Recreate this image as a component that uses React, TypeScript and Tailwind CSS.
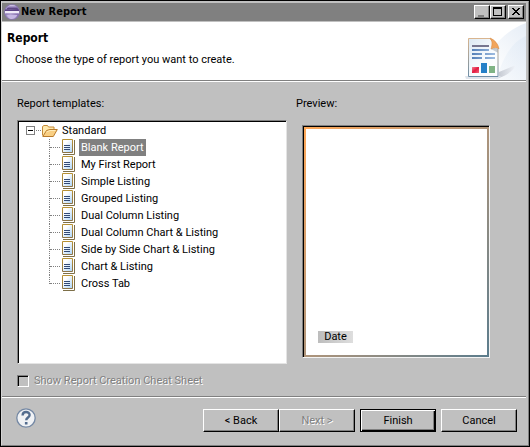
import type { ReactNode } from "react";

const templates = [
  "Blank Report",
  "My First Report",
  "Simple Listing",
  "Grouped Listing",
  "Dual Column Listing",
  "Dual Column Chart & Listing",
  "Side by Side Chart & Listing",
  "Chart & Listing",
  "Cross Tab",
];

function EclipseLogo() {
  return (
    <svg className="h-4 w-4 shrink-0" viewBox="0 0 16 16" aria-hidden="true">
      <defs>
        <linearGradient id="orb" x1="0" y1="0" x2="1" y2="0">
          <stop offset="0" stopColor="#8f80b8" />
          <stop offset="0.4" stopColor="#d9d0ee" />
          <stop offset="1" stopColor="#75589f" />
        </linearGradient>
        <linearGradient id="orbTop" x1="0" y1="0" x2="0" y2="1">
          <stop offset="0" stopColor="#d8d0ea" />
          <stop offset="0.5" stopColor="#8d78b4" />
          <stop offset="1" stopColor="#3b2360" />
        </linearGradient>
      </defs>
      <circle cx="8" cy="8" r="7.8" fill="#8a74b4" />
      <circle cx="8" cy="8" r="7" fill="url(#orb)" />
      <path d="M2.500 5.500C3.400 2.700 6 1 8.500 1s4.800 1.800 5.700 4.500Z" fill="url(#orbTop)" />
      <path d="M1 5.500h14v1.500H1z" fill="#5b4385" />
      <path d="M1 7h14v2.500H1z" fill="#efeaf8" />
      <path d="M1.500 9.500h13v1H1.500z" fill="#8a74b4" />
      <path d="M3 11h10.500l-1.500 2a6 6 0 0 1-7.500 0Z" fill="#c6b8e4" />
    </svg>
  );
}

function ReportBanner() {
  return (
    <svg className="h-[58px] w-[75px] shrink-0" viewBox="0 0 75 58" aria-hidden="true">
      <defs>
        <linearGradient id="swoosh" x1="0" y1="1" x2="1" y2="0">
          <stop offset="0.3" stopColor="#ffffff" />
          <stop offset="1" stopColor="#e6edf6" />
        </linearGradient>
        <linearGradient id="swooshInner" x1="0" y1="1" x2="1" y2="0">
          <stop offset="0" stopColor="#f3f7fb" />
          <stop offset="1" stopColor="#dce7f4" />
        </linearGradient>
        <linearGradient id="shade" x1="0" y1="0" x2="1" y2="0">
          <stop offset="0" stopColor="#b7bcc6" />
          <stop offset="1" stopColor="#f2f5fa" />
        </linearGradient>
        <linearGradient id="paper" x1="0" y1="0" x2="1" y2="1">
          <stop offset="0" stopColor="#dce9f3" />
          <stop offset="0.6" stopColor="#fafcfe" />
          <stop offset="1" stopColor="#ffffff" />
        </linearGradient>
        <linearGradient id="edge" x1="0" y1="0" x2="0" y2="1">
          <stop offset="0" stopColor="#d9b58f" />
          <stop offset="1" stopColor="#6f8ea6" />
        </linearGradient>
        <linearGradient id="textBar" x1="0" y1="0" x2="1" y2="0">
          <stop offset="0" stopColor="#5480b8" />
          <stop offset="1" stopColor="#9dbbe0" />
        </linearGradient>
        <linearGradient id="redBar" x1="0" y1="0" x2="1" y2="1">
          <stop offset="0" stopColor="#f08090" />
          <stop offset="0.5" stopColor="#e21a40" />
          <stop offset="1" stopColor="#f4647c" />
        </linearGradient>
      </defs>
      <path d="M75 1C59 7 49 16 42 27L15 58h60Z" fill="url(#swoosh)" />
      <path d="M75 14C61 20 52 35 45 58h30Z" fill="url(#swooshInner)" opacity=".6" />
      <path d="M48 50l17-7c-3 6-9 10-17 13Z" fill="url(#shade)" opacity=".75" />
      <path d="M14 54h36l-3 3H15Z" fill="#e0e5ec" />
      <path d="M17.500 16.500H39l8 10V54.500H17.500Z" fill="url(#paper)" stroke="url(#edge)" />
      <path d="M39 16c2.500 3 2.500 6 1 11 3-1.500 6-1.500 8-.2C47 22 44 18 39 16Z" fill="#f2a55c" stroke="#d98d48" strokeWidth=".6" />
      <path d="M40 27c3-1.500 5-1.200 7-.2v4Z" fill="#8e99a8" opacity=".5" />
      <path d="M21 23h17v2H21z" fill="#777790" />
      <path d="M21 27h17v2H21zM21 31h10v2H21zM34 31h10v2H34zM21 35h10v2H21zM34 35h10v2H34z" fill="url(#textBar)" />
      <path d="M21 45h7v6h-7z" fill="url(#redBar)" />
      <path d="M30 41h6v10h-6z" fill="#2580c8" />
      <path d="M38 44h6v7h-6z" fill="#80b485" />
    </svg>
  );
}

function FolderIcon() {
  return (
    <svg className="h-4 w-4 shrink-0" viewBox="0 0 16 16" aria-hidden="true">
      <path d="M.5 12.500V3.500l1.500-1h3.500l1 1.500h5.500v3" fill="#ffe9ae" stroke="#c58a36" />
      <path d="M.8 13.500 4.500 7.500l3.500-1h7.300l-4 7Z" fill="#f9cf83" stroke="#b97b2b" />
      <path d="M4.500 9 8 7.500h5.500" fill="none" stroke="#ffedbb" />
    </svg>
  );
}

function PageIcon() {
  return (
    <svg className="h-[17px] w-[13px] shrink-0" viewBox="0 0 13 17" aria-hidden="true">
      <defs>
        <linearGradient id="sheet" x1="0" y1="0" x2="1" y2="1">
          <stop offset="0.3" stopColor="#ffffff" />
          <stop offset="1" stopColor="#a9d3f8" />
        </linearGradient>
        <linearGradient id="frame" x1="0" y1="0" x2="0" y2="1">
          <stop offset="0" stopColor="#b89235" />
          <stop offset="1" stopColor="#8c7446" />
        </linearGradient>
      </defs>
      <path d="M12.500 1v14.500H1" fill="none" stroke="#7d6f48" />
      <path d="M.5 .5h10v13H.5z" fill="url(#sheet)" stroke="url(#frame)" />
      <path d="M2 6.500h6M2 8.500h6M2 10.500h6" stroke="#334a76" />
    </svg>
  );
}

function TitleButton({ label, children }: { label: string; children: ReactNode }) {
  return (
    <button
      aria-label={label}
      className="h-[14px] w-4 border border-t-white border-r-black border-b-black border-l-white bg-[#c0c0c0] shadow-[inset_-1px_-1px_0_#808080]"
    >
      <svg className="h-3 w-[14px]" viewBox="0 0 14 12" shapeRendering="crispEdges" aria-hidden="true">
        {children}
      </svg>
    </button>
  );
}

const pushButton =
  "h-[23px] w-[76px] border border-t-white border-r-black border-b-black border-l-white bg-[#c0c0c0] text-center leading-4 shadow-[inset_-1px_-1px_0_#808080]";

export default function App() {
  return (
    <div className="border border-black bg-[#c0c0c0] font-['Roboto',sans-serif] text-[11px] leading-4 text-black">
      <div className="border-t border-r border-b border-l border-t-[#c0c0c0] border-r-[#808080] border-b-[#808080] border-l-[#d4d4d4]">
        <div className="pt-px pr-[2px]">
          <header className="flex h-[18px] items-center bg-[#808080] pr-[2px] pl-[2px]">
            <EclipseLogo />
            <h1 className="ml-px flex-1 font-['DejaVu_Sans_Condensed','DejaVu_Sans',sans-serif] font-bold">New Report</h1>
            <TitleButton label="Minimize">
              <path d="M3 9h6v2H3z" fill="#808080" />
            </TitleButton>
            <TitleButton label="Maximize">
              <path d="M2 1h9v9H2zM3 3v6h7V3z" fill="#000" fillRule="evenodd" />
            </TitleButton>
            <span className="w-[2px]" />
            <TitleButton label="Close">
              <path
                d="M3 2h2v1h1v1h2V3h1V2h2v1h-1v1H9v1H8v1h1v1h1v1h1v1H9V8H8V7H6v1H5v1H3V8h1V7h1V6h1V5H5V4H4V3H3z"
                fill="#000"
              />
            </TitleButton>
          </header>

          <section className="mt-px flex justify-between border-b border-[#808080] bg-white">
            <div className="pt-2 pl-[5px]">
              <h2 className="font-['DejaVu_Sans_Condensed','DejaVu_Sans',sans-serif] text-[12px] font-bold">Report</h2>
              <p className="mt-[6px] pl-2">Choose the type of report you want to create.</p>
            </div>
            <ReportBanner />
          </section>

          <main className="border-t border-white pt-[14px] pr-9 pb-[7px] pl-[15px]">
            <div className="flex items-start gap-[15px]">
              <div className="min-w-0 flex-1">
                <h3 id="templates-label">Report templates:</h3>
                <div className="mt-2 min-h-[244px] border border-t-[#808080] border-r-[#e4e4e4] border-b-[#e4e4e4] border-l-[#808080] bg-white pb-1 pl-2 shadow-[inset_1px_1px_0_#000]">
                  <ul role="tree" aria-labelledby="templates-label" className="pt-px leading-[17px]">
                    <li role="treeitem" aria-expanded="true">
                      <div className="flex h-[17px] items-center">
                        <button
                          aria-label="Collapse Standard"
                          className="flex h-[9px] w-[9px] items-center justify-center border border-[#808080]"
                        >
                          <span className="h-px w-[5px] bg-black" />
                        </button>
                        <span className="mr-px ml-px w-[5px] border-t border-dotted border-[#808080]" />
                        <FolderIcon />
                        <span className="ml-1">Standard</span>
                      </div>
                      <ul role="group">
                        {templates.map((name, i) => (
                          <li
                            key={name}
                            role="treeitem"
                            aria-selected={i === 0}
                            className="flex h-[17px] items-center pl-[23px]"
                          >
                            <span
                              className={
                                i === templates.length - 1
                                  ? "h-[9px] self-start border-l border-dotted border-[#808080]"
                                  : "h-[17px] border-l border-dotted border-[#808080]"
                              }
                            />
                            <span className="mr-[2px] w-[10px] border-t border-dotted border-[#808080]" />
                            <PageIcon />
                            <span
                              className={
                                i === 0
                                  ? "ml-1 h-[17px] bg-[#808080] px-[2px] text-white"
                                  : "ml-1 h-[17px] px-[2px]"
                              }
                            >
                              {name}
                            </span>
                          </li>
                        ))}
                      </ul>
                    </li>
                  </ul>
                </div>
              </div>

              <div className="w-[188px]">
                <h3 className="-ml-[6px]">Preview:</h3>
                <div className="mt-[13px] border border-t-[#808080] border-r-[#f4f4f4] border-b-[#f4f4f4] border-l-[#808080]">
                  <div className="border-t border-l border-black">
                    <div className="bg-linear-to-br from-[#ffa857] to-[#5b7c8c] p-[2px]">
                      <div className="flex h-[226px] items-end bg-white pb-3 pl-3">
                        <span className="h-3 w-[35px] bg-linear-to-r from-[#bdbdbd] to-[#dedede] text-center leading-3">
                          Date
                        </span>
                      </div>
                    </div>
                  </div>
                </div>
              </div>
            </div>

            <label className="mt-[9px] flex items-center gap-[5px] text-[#808080] [text-shadow:1px_1px_0_#fff]">
              <input
                type="checkbox"
                disabled
                className="h-3 w-3 appearance-none border border-t-[#808080] border-r-white border-b-white border-l-[#808080] shadow-[inset_1px_1px_0_#000]"
              />
              Show Report Creation Cheat Sheet
            </label>
          </main>

          <footer className="flex items-center border-t border-[#808080] pr-[9px] pb-[13px] pl-[14px] shadow-[inset_0_1px_0_#fff]">
            <button aria-label="Help" className="mt-[6px] h-5 w-5">
              <svg viewBox="0 0 20 20" aria-hidden="true">
                <circle cx="10" cy="10" r="9.200" fill="#f0f2f5" stroke="#7488a4" strokeWidth="1.300" />
                <path
                  d="M6.600 7.500c0-4.700 7-4.500 7-.5 0 2.500-3.400 2.500-3.400 5.300"
                  fill="none"
                  stroke="#536c8e"
                  strokeWidth="2.400"
                />
                <path d="M8.900 14h2.600v2.500H8.900z" fill="#536c8e" />
              </svg>
            </button>
            <div className="mt-3 ml-auto flex">
              <button className={pushButton}>&lt; Back</button>
              <button
                disabled
                className="h-[23px] w-[76px] border border-t-white border-r-black border-b-black border-l-white bg-[#c0c0c0] text-center leading-4 text-[#808080] shadow-[inset_-1px_-1px_0_#808080] [text-shadow:1px_1px_0_#fff]"
              >
                Next &gt;
              </button>
              <button className="ml-[5px] h-[23px] w-[76px] border border-black bg-[#c0c0c0] text-center leading-4 shadow-[inset_1px_1px_0_#fff,inset_-1px_-1px_0_#000,inset_-2px_-2px_0_#808080]">
                Finish
              </button>
              <span className="w-[5px]" />
              <button className={pushButton}>Cancel</button>
            </div>
          </footer>
        </div>
      </div>
    </div>
  );
}
